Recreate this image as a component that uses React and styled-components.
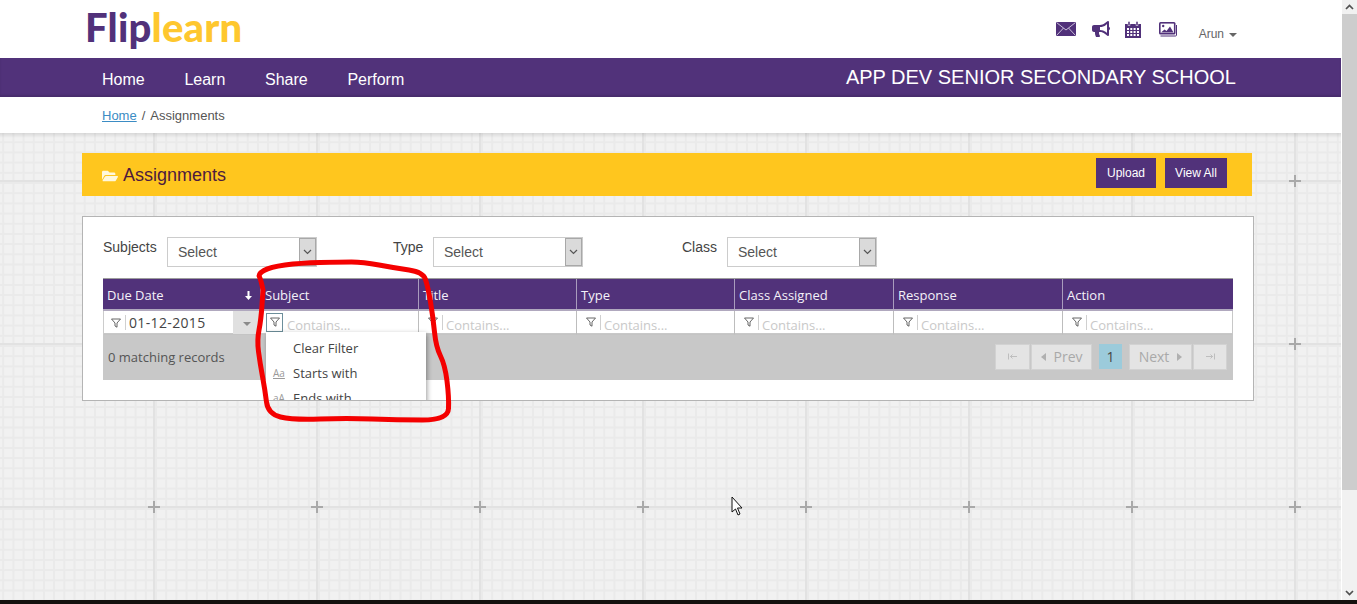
import React from "react";
import styled, { createGlobalStyle } from "styled-components";
import { FaBullhorn, FaFolderOpen } from "react-icons/fa";

const tile = encodeURIComponent(
  `<svg xmlns="http://www.w3.org/2000/svg" width="163" height="163">` +
    Array.from({ length: 16 }, (_, i) => {
      const p = (i * 163) / 16 + 1.5;
      return `<rect x="${p}" y="0" width="2" height="163" fill="#eaeaea"/><rect x="0" y="${p}" width="163" height="2" fill="#eaeaea"/>`;
    }).join("") +
    `<rect x="81" y="0" width="2" height="163" fill="#e2e2e2"/><rect x="0" y="81" width="163" height="2" fill="#e2e2e2"/>` +
    `<rect x="81" y="76" width="2" height="12" fill="#a9a9a9"/><rect x="76" y="81" width="12" height="2" fill="#a9a9a9"/>` +
    `</svg>`
);

const Global = createGlobalStyle`
  html, body { margin: 0; padding: 0; height: 604px; overflow: hidden; background: #fff; }
  body { font-family: "Liberation Sans", Arial, sans-serif; }
  * { box-sizing: border-box; }
`;

const Screen = styled.div`
  position: relative;
  width: 1357px;
  height: 604px;
  display: flex;
  flex-direction: column;
  overflow: hidden;
`;
const Viewport = styled.div`
  flex: 1;
  min-height: 0;
  display: flex;
`;
const Page = styled.div`
  flex: 1;
  min-width: 0;
  display: flex;
  flex-direction: column;
  background: #fff;
`;
const Taskbar = styled.div`
  height: 4px;
  background: #14110e;
`;

const Scrollbar = styled.div`
  width: 15px;
  margin-left: 1px;
  background: #f1f1f1;
  display: flex;
  flex-direction: column;
`;
const ScrollArrow = styled.div`
  height: 14px;
  display: flex;
  align-items: center;
  justify-content: center;
  color: #505050;
`;
const ScrollThumb = styled.div`
  height: 476px;
  background: #cdcdcd;
`;
const ScrollRest = styled.div`
  flex: 1;
`;

const Header = styled.header`
  height: 58px;
  display: flex;
  align-items: center;
  justify-content: space-between;
  padding: 0 104px 0 85px;
`;
const Logo = styled.div`
  font-family: Lato, sans-serif;
  font-weight: 900;
  font-size: 40px;
  line-height: 40px;
  letter-spacing: 0.2px;
  color: #51317a;
  margin-bottom: 5px;
  span { color: #fec72e; }
`;
const HeaderTools = styled.div`
  display: flex;
  align-items: center;
  color: #51317a;
`;
const ToolIcon = styled.span`
  display: flex;
  width: ${(p) => p.$w}px;
  margin-right: ${(p) => p.$gap}px;
`;
const UserMenu = styled.span`
  font-size: 12px;
  color: #666;
  display: flex;
  align-items: center;
  gap: 5px;
  margin-top: 10px;
`;
const Caret = styled.i`
  display: block;
  width: 0;
  height: 0;
  border-left: 4px solid transparent;
  border-right: 4px solid transparent;
  border-top: 4px solid ${(p) => p.$c || "#666"};
  margin-top: 2px;
`;

const Nav = styled.nav`
  height: 39px;
  background: #51327a;
  box-shadow: inset 0 -2px 2px rgba(0, 0, 0, 0.12);
  display: flex;
  align-items: center;
  padding: 0 105px 0 102px;
  color: #fff;
`;
const NavLink = styled.a`
  font-size: 16px;
  margin-right: 39.7px;
  margin-top: 5px;
`;
const School = styled.div`
  margin-left: auto;
  font-size: 20px;
`;

const Crumbs = styled.div`
  height: 36px;
  display: flex;
  align-items: center;
  padding-left: 102px;
  font-size: 13px;
  color: #555;
  gap: 5px;
  a { color: #3b8cc4; text-decoration: underline; }
`;

const Content = styled.main`
  flex: 1;
  min-height: 0;
  padding: 20px 87px 0 82px;
  background-color: #f1f1f1;
  background-image: linear-gradient(rgba(0, 0, 0, 0.1), rgba(0, 0, 0, 0) 5px),
    url("data:image/svg+xml,${tile}");
  background-size: 100% 5px, 163px 163px;
  background-repeat: no-repeat, repeat;
  background-position: 0 0, 72px -34px;
`;

const Banner = styled.div`
  width: 1170px;
  height: 43px;
  background: #ffc61e;
  display: flex;
  align-items: center;
  padding: 0 25px 0 20px;
`;
const BannerTitle = styled.h1`
  margin: 2px 0 0;
  font-size: 18px;
  font-weight: 400;
  color: #4d1a3e;
  display: flex;
  align-items: center;
  gap: 5px;
  svg { color: #fff8dc; font-size: 16px; }
`;
const BannerActions = styled.div`
  margin: 0 0 4px auto;
  display: flex;
  gap: 9px;
`;
const ActionButton = styled.button`
  height: 30px;
  width: ${(p) => p.$w}px;
  border: 0;
  background: #51327a;
  color: #fff;
  font: 12px "Liberation Sans", Arial, sans-serif;
  padding: 0;
`;

const Card = styled.section`
  margin-top: 20px;
  width: 1172px;
  height: 185px;
  background: #fff;
  border: 1px solid #b4b4b4;
  padding: 20px;
  overflow: hidden;
`;
const Filters = styled.div`
  display: flex;
  height: 30px;
  margin-bottom: 11px;
`;
const FilterLabel = styled.label`
  font-size: 14px;
  color: #444;
  width: ${(p) => p.$w}px;
  line-height: 20px;
`;
const SelectBox = styled.div`
  width: 150px;
  height: 30px;
  border: 1px solid #ccc;
  margin-right: ${(p) => p.$gap}px;
  display: flex;
  align-items: center;
  justify-content: space-between;
  font-size: 14px;
  color: #555;
  padding-left: 10px;
`;
const SelectBtn = styled.span`
  width: 17px;
  height: 28px;
  background: #dadada;
  border: 1px solid #a8a8a8;
  display: flex;
  align-items: center;
  justify-content: center;
`;

const Grid = styled.div`
  position: relative;
  width: 1130px;
`;
const Cols = styled.div`
  display: grid;
  grid-template-columns: 158px 158px 158px 158px 159px 169px 170px;
`;
const HeadRow = styled(Cols)`
  height: 33px;
  background: #51327a;
  border-top: 1px solid #9d9d9d;
  border-bottom: 2px solid #b0a8be;
`;
const HeadCell = styled.div`
  font: 13px "Open Sans", sans-serif;
  color: #f4f1f8;
  display: flex;
  align-items: center;
  justify-content: space-between;
  padding: 2px 8px 0 4px;
  border-right: 1px solid #a99cbd;
  &:last-child { border-right: 0; }
`;
const FilterRow = styled(Cols)`
  height: 22px;
  background: #fff;
`;
const FilterCell = styled.div`
  position: relative;
  display: flex;
  align-items: center;
  border-right: 1px solid #bdbdbd;
  padding-left: ${(p) => (p.$date ? 7 : 5)}px;
  border-bottom: 1px solid #c4c4c4;
  &:first-child { border-left: 1px solid #ccc; }
  &:last-child { border-right: 1px solid #c8c8c8; }
`;
const FunnelBox = styled.span`
  width: 17px;
  height: 19px;
  display: flex;
  align-items: center;
  justify-content: center;
  margin-top: -1px;
  margin-right: ${(p) => (p.$on ? 1 : 0)}px;
  border: 1px solid ${(p) => (p.$on ? "#6d8f9b" : "transparent")};
  flex: none;
`;
const Pipe = styled.i`
  width: 1px;
  height: 15px;
  background: #d0d0d0;
  margin-left: ${(p) => p.$left}px;
  flex: none;
`;
const Placeholder = styled.span`
  font: 13px "Open Sans", sans-serif;
  color: #c9c9c9;
  margin-top: 5px;
  margin-left: 3px;
  white-space: nowrap;
`;
const DateValue = styled.span`
  font: 14px "Open Sans", sans-serif;
  color: #444;
  letter-spacing: 0.35px;
  margin-left: 3px;
`;
const DateBtn = styled.span`
  position: absolute;
  right: 0;
  top: 0;
  bottom: 0;
  width: 27px;
  background: #e0e0e0;
  display: flex;
  align-items: center;
  justify-content: center;
`;

const Pager = styled.div`
  height: 47px;
  background: #c8c8c8;
  display: flex;
  align-items: center;
  padding: 0 6px 0 5px;
  font: 13px "Open Sans", sans-serif;
  color: #555;
`;
const PagerButtons = styled.div`
  margin-left: auto;
  display: flex;
  align-items: center;
`;
const PageBtn = styled.span`
  width: ${(p) => p.$w}px;
  height: 26px;
  margin-left: ${(p) => p.$gap || 0}px;
  background: #e4e4e4;
  border: 1px solid #d2d2d2;
  color: #a9a9a9;
  font-size: 14px;
  display: flex;
  align-items: center;
  justify-content: center;
  gap: 8px;
`;
const CurrentPage = styled.span`
  width: 23px;
  height: 25px;
  margin: 0 7px;
  background: #9ccbdb;
  color: #444;
  font-size: 14px;
  display: flex;
  align-items: center;
  justify-content: center;
`;
const Arrow = styled.i`
  width: 0;
  height: 0;
  border-top: 4px solid transparent;
  border-bottom: 4px solid transparent;
  ${(p) => (p.$left ? "border-right: 5px solid #b0b0b0;" : "border-left: 5px solid #b0b0b0;")}
`;

const Menu = styled.div`
  position: absolute;
  left: 163px;
  top: 54px;
  width: 160px;
  height: 90px;
  background: #fff;
  box-shadow: 1px 2px 5px rgba(0, 0, 0, 0.4);
  font: 13px "Open Sans", sans-serif;
  color: #444;
  padding-top: 3px;
`;
const MenuItem = styled.div`
  height: 25px;
  display: flex;
  align-items: center;
  padding-left: 7px;
`;
const MenuGlyph = styled.span`
  width: 20px;
  font-size: 10px;
  color: #9a9a9a;
  text-decoration: ${(p) => (p.$u ? "underline" : "none")};
`;

const Overlay = styled.svg`
  position: absolute;
  left: 0;
  top: 0;
  pointer-events: none;
`;

const Funnel = () => (
  <svg width="10" height="10" viewBox="0 0 10 10" fill="none" stroke="#555" strokeWidth="0.9">
    <path d="M0.5 1h9L6 5v4.200L4 8V5z" />
  </svg>
);
const Chevron = ({ up, color = "#555", weight = 1.7 }) => (
  <svg width="9" height="6" viewBox="0 0 9 6" fill="none" stroke={color} strokeWidth={weight}>
    <path d={up ? "M1 5l3.500-3.500L8 5" : "M1 1l3.500 3.500L8 1"} />
  </svg>
);
const SortArrow = () => (
  <svg width="7" height="9" viewBox="0 0 7 9" fill="#fff">
    <path d="M2.500 0h2v5h2.500L3.500 9 0 5h2.500z" />
  </svg>
);
const JumpIcon = ({ end }) => (
  <svg width="10" height="7" viewBox="0 0 10 7" fill="none" stroke="#b4b4b4" strokeWidth="0.8">
    <path d={end ? "M9.500 0.500v6M1 3.500h6.500M5.500 1.500l2 2-2 2" : "M0.500 0.500v6M2.500 3.500H9M4.500 1.500l-2 2 2 2"} />
  </svg>
);

const MailIcon = () => (
  <svg width="20" height="14" viewBox="0 0 20 14">
    <rect width="20" height="14" fill="#51317a" />
    <path d="M0.500 0.500L10 8l9.500-7.500M0.500 13.500L7.500 6M19.500 13.500L12.500 6" stroke="#c9bfd9" strokeWidth="1" fill="none" />
  </svg>
);
const CalIcon = () => (
  <svg width="16" height="17" viewBox="0 0 16 17">
    <path d="M0 3h16v14H0z" fill="#51317a" />
    <path d="M3 0.500h2v4H3zM11 0.500h2v4h-2z" fill="#51317a" stroke="#fff" strokeWidth="0.5" />
    <path d="M2 7h2v2H2zM5.300 7h2v2h-2zM8.600 7h2v2h-2zM12 7h2v2h-2zM2 10h2v2H2zM5.300 10h2v2h-2zM8.600 10h2v2h-2zM12 10h2v2h-2zM2 13h2v2H2zM5.300 13h2v2h-2zM8.600 13h2v2h-2zM12 13h2v2h-2z" fill="#fff" />
  </svg>
);
const PhotoIcon = () => (
  <svg width="18" height="15" viewBox="0 0 18 15">
    <rect x="0" y="0" width="16.500" height="12.500" rx="1.500" fill="#51317a" />
    <rect x="1.600" y="1.600" width="13.300" height="9.300" fill="#fff" />
    <circle cx="4.200" cy="4" r="1.200" fill="#51317a" />
    <path d="M2 10.500l3.500-3 2 1.500 3.500-4.500 3.500 6z" fill="#51317a" />
    <path d="M1.500 14h15a1 1 0 0 0 1-1V3" stroke="#51317a" strokeWidth="1" fill="none" />
  </svg>
);

const columns = ["Due Date", "Subject", "Title", "Type", "Class Assigned", "Response", "Action"];
const SELECTS = [
  { label: "Subjects", w: 64, gap: 76 },
  { label: "Type", w: 40, gap: 99 },
  { label: "Class", w: 45, gap: 0 },
];
const NAV = ["Home", "Learn", "Share", "Perform"];

const RED_POINTS = [
  [263, 290], [261, 280], [258, 274], [270, 267], [300, 263], [340, 262], [363, 262], [395, 268], [423, 272],
  [428, 287], [433, 317], [436, 347], [445, 365], [449, 397], [448, 420], [397, 420], [347, 418], [293, 420],
  [268, 414], [265, 390], [260, 363], [257, 340], [261, 320], [263, 290],
];
const redPath = RED_POINTS.reduce((d, [x, y], i, pts) => {
  if (i === 0) return `M${x} ${y}`;
  const [nx, ny] = pts[i + 1] || [x, y];
  return `${d} Q${x} ${y} ${(x + nx) / 2} ${(y + ny) / 2}`;
}, "");

export default function App() {
  return (
    <Screen>
      <Global />
      <Viewport>
        <Page>
          <Header>
            <Logo>
              Flip<span>learn</span>
            </Logo>
            <HeaderTools>
              <ToolIcon $w={20} $gap={16}><MailIcon /></ToolIcon>
              <ToolIcon $w={18} $gap={15}><FaBullhorn size={18} /></ToolIcon>
              <ToolIcon $w={16} $gap={18}><CalIcon /></ToolIcon>
              <ToolIcon $w={18} $gap={22}><PhotoIcon /></ToolIcon>
              <UserMenu>Arun <Caret /></UserMenu>
            </HeaderTools>
          </Header>
          <Nav>
            {NAV.map((n) => (
              <NavLink key={n}>{n}</NavLink>
            ))}
            <School>APP DEV SENIOR SECONDARY SCHOOL</School>
          </Nav>
          <Crumbs>
            <a>Home</a> <span>/</span> <span>Assignments</span>
          </Crumbs>
          <Content>
            <Banner>
              <BannerTitle>
                <FaFolderOpen /> Assignments
              </BannerTitle>
              <BannerActions>
                <ActionButton $w={60}>Upload</ActionButton>
                <ActionButton $w={62}>View All</ActionButton>
              </BannerActions>
            </Banner>
            <Card>
              <Filters>
                {SELECTS.map((s) => (
                  <React.Fragment key={s.label}>
                    <FilterLabel $w={s.w}>{s.label}</FilterLabel>
                    <SelectBox $gap={s.gap}>
                      Select
                      <SelectBtn><Chevron weight={1.2} /></SelectBtn>
                    </SelectBox>
                  </React.Fragment>
                ))}
              </Filters>
              <Grid>
                <HeadRow>
                  {columns.map((c, i) => (
                    <HeadCell key={c}>
                      {c}
                      {i === 0 && <SortArrow />}
                    </HeadCell>
                  ))}
                </HeadRow>
                <FilterRow>
                  {columns.map((c, i) =>
                    i === 0 ? (
                      <FilterCell key={c} $date>
                        <Funnel />
                        <Pipe $left={4} />
                        <DateValue>01-12-2015</DateValue>
                        <DateBtn><Caret $c="#8a8a8a" /></DateBtn>
                      </FilterCell>
                    ) : (
                      <FilterCell key={c}>
                        <FunnelBox $on={i === 1}><Funnel /></FunnelBox>
                        {i !== 1 && <Pipe $left={1} />}
                        <Placeholder>Contains...</Placeholder>
                      </FilterCell>
                    )
                  )}
                </FilterRow>
                <Pager>
                  0 matching records
                  <PagerButtons>
                    <PageBtn $w={35}><JumpIcon /></PageBtn>
                    <PageBtn $w={61} $gap={1}><Arrow $left /> Prev</PageBtn>
                    <CurrentPage>1</CurrentPage>
                    <PageBtn $w={63}>Next <Arrow /></PageBtn>
                    <PageBtn $w={34} $gap={1}><JumpIcon end /></PageBtn>
                  </PagerButtons>
                </Pager>
                <Menu>
                  <MenuItem><MenuGlyph />Clear Filter</MenuItem>
                  <MenuItem><MenuGlyph $u>Aa</MenuGlyph>Starts with</MenuItem>
                  <MenuItem><MenuGlyph $u>aA</MenuGlyph>Ends with</MenuItem>
                </Menu>
              </Grid>
            </Card>
          </Content>
        </Page>
        <Scrollbar>
          <ScrollArrow><Chevron up color="#505050" /></ScrollArrow>
          <ScrollThumb />
          <ScrollRest />
          <ScrollArrow><Chevron color="#505050" /></ScrollArrow>
        </Scrollbar>
      </Viewport>
      <Taskbar />
      <Overlay width="1357" height="604" viewBox="0 0 1357 604">
        <path d={redPath} fill="none" stroke="#f40000" strokeWidth="5" strokeLinejoin="round" strokeLinecap="round" />
        <path d="M732 497v15l3.500-3 2.500 6 2-1-2.500-6h4.500z" fill="#fff" stroke="#111" strokeWidth="1" />
      </Overlay>
    </Screen>
  );
}
